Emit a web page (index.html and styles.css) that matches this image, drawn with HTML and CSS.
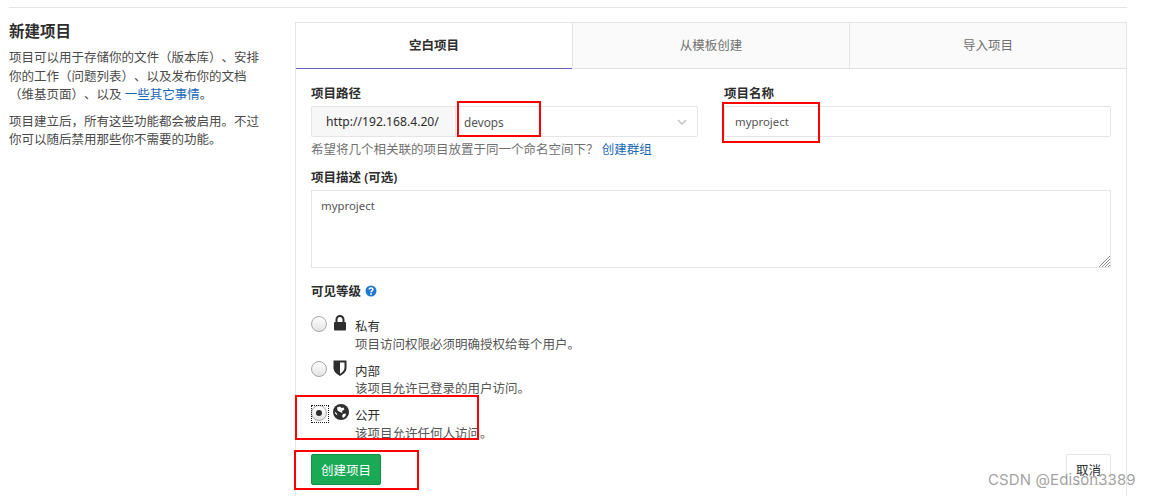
FILE: index.html
```html
<!DOCTYPE html>
<html lang="zh-CN">

<head>
    <meta charset="UTF-8">
    <title>新建项目</title>
    <link rel="stylesheet" href="styles.css">
</head>

<body>
    <div class="page">
        <div class="top-line"></div>

        <div class="row">
            <!-- Left description -->
            <div class="intro">
                <h2>新建项目</h2>
                <p>项目可以用于存储你的文件（版本库）、安排你的工作（问题列表）、以及发布你的文档（维基页面）、以及 <a href="#">一些其它事情</a>。</p>
                <p>项目建立后，所有这些功能都会被启用。不过你可以随后禁用那些你不需要的功能。</p>
            </div>

            <!-- Tabs and form -->
            <div class="panel">
                <div class="tabs">
                    <div class="tab active">空白项目</div>
                    <div class="tab">从模板创建</div>
                    <div class="tab">导入项目</div>
                </div>

                <form class="form">
                    <div class="two-cols">
                        <div class="col">
                            <label class="label">项目路径</label>
                            <div class="path-group">
                                <span class="prefix">http://192.168.4.20/</span>
                                <div class="select">
                                    <span>devops</span>
                                    <svg class="chevron" width="10" height="6" viewBox="0 0 10 6">
                                        <path d="M1 1l4 4 4-4" fill="none" stroke="#c4c4c4" stroke-width="1.5" />
                                    </svg>
                                </div>
                            </div>
                        </div>
                        <div class="col">
                            <label class="label">项目名称</label>
                            <input class="input" type="text" value="myproject">
                        </div>
                    </div>

                    <div class="help">希望将几个相关联的项目放置于同一个命名空间下？ <a href="#">创建群组</a></div>

                    <label class="label desc-label">项目描述 (可选)</label>
                    <div class="textarea-wrap">
                        <textarea class="textarea">myproject</textarea>
                        <svg class="grip" width="11" height="11" viewBox="0 0 11 11">
                            <path d="M0 11L11 0M3 11l8-8M6 11l5-5M9 11l2-2" stroke="#8a8a8a" stroke-width="1" />
                        </svg>
                    </div>

                    <div class="label level-label">可见等级
                        <svg class="help-icon" width="12" height="12" viewBox="0 0 12 12">
                            <circle cx="6" cy="6" r="5.500" fill="#1f78d1" />
                            <path d="M4.200 4.600c0-2.200 3.700-2.200 3.700-.1 0 1.300-1.900 1.300-1.900 2.700" fill="none" stroke="#fff" stroke-width="1.500" />
                            <rect x="5.200" y="8.100" width="1.600" height="1.600" fill="#fff" />
                        </svg>
                    </div>

                    <div class="option first">
                        <span class="radio"></span>
                        <svg class="opt-icon" width="14" height="16" viewBox="0 0 14 16">
                            <path d="M2.500 7V4.500a4.500 4.500 0 0 1 9 0V7H9.500V4.500a2.500 2.500 0 0 0-5 0V7z" fill="#2e2e2e" />
                            <rect x="1" y="7" width="12" height="8.500" rx="1" fill="#2e2e2e" />
                        </svg>
                        <div class="opt-text">
                            <div class="opt-title">私有</div>
                            <div>项目访问权限必须明确授权给每个用户。</div>
                        </div>
                    </div>

                    <div class="option">
                        <span class="radio"></span>
                        <svg class="opt-icon" width="14" height="16" viewBox="0 0 14 16">
                            <path d="M.5.500h13v7.500c0 3.500-3.500 6.500-6.500 8C4 14.500.5 11.500.5 8z" fill="#2e2e2e" />
                            <path d="M7 2.500h4.500V8c0 2.300-2.500 4.500-4.500 5.700z" fill="#fff" />
                        </svg>
                        <div class="opt-text">
                            <div class="opt-title">内部</div>
                            <div>该项目允许已登录的用户访问。</div>
                        </div>
                    </div>

                    <div class="option">
                        <span class="radio checked"></span>
                        <svg class="opt-icon globe" width="16" height="16" viewBox="0 0 16 16">
                            <circle cx="8" cy="8" r="8" fill="#2e2e2e" />
                            <path d="M4 3.500l3-1 1.500 1.500 2-.5 1 2-2.500 1.500.5 2L7 8 4.500 6.500zM10 10l3-.5-.5 2.500-2.500 2-1-2zM1.500 7.500l2 1.500 1 2.500-2-1.500z" fill="#fff" />
                        </svg>
                        <div class="opt-text">
                            <div class="opt-title">公开</div>
                            <div>该项目允许任何人访问。</div>
                        </div>
                    </div>

                    <div class="actions">
                        <button class="btn btn-create" type="button">创建项目</button>
                        <button class="btn btn-cancel" type="button">取消</button>
                    </div>
                </form>
            </div>
        </div>

        <!-- Red marks drawn over the screenshot -->
        <div class="mark mark-path"></div>
        <div class="mark mark-name"></div>
        <div class="mark mark-public"></div>
        <div class="mark mark-create"></div>

        <div class="watermark">CSDN @Edison3389</div>
    </div>
</body>

</html>
```

FILE: styles.css
```css
* {
    box-sizing: border-box;
    font-family: "Noto Sans", "Noto Sans CJK SC", sans-serif;
    text-spacing-trim: space-all;
}

html,
body {
    margin: 0;
    padding: 0;
    height: 496px;
    overflow: hidden;
    background: #fff;
}

body {
    color: #2e2e2e;
    font-size: 12.500px;
}

a {
    color: #1b69b6;
    text-decoration: none;
}

.page {
    position: relative;
    height: 496px;
    overflow: hidden;
    padding: 7px 23px 0 9px;
}

.top-line {
    height: 1px;
    background: #e5e5e5;
}

.row {
    display: flex;
    margin-top: 14px;
}

.intro {
    width: 286px;
    flex: none;
    padding-right: 33px;
    color: #4a4a4a;
    line-height: 18.500px;
}

.intro h2 {
    margin: 0 0 8px;
    font-size: 15.500px;
    line-height: 19px;
    font-weight: 600;
    color: #2e2e2e;
}

.intro p {
    margin: 0 0 8px;
}

.panel {
    flex: 1;
    height: 600px;
    border: 1px solid #e5e5e5;
    border-bottom: none;
}

.tabs {
    display: flex;
    height: 46px;
    background: #fafafa;
    border-bottom: 1px solid #e5e5e5;
}

.tab {
    flex: 1;
    display: flex;
    align-items: center;
    justify-content: center;
    padding-bottom: 2px;
    color: #707070;
    border-left: 1px solid #e5e5e5;
}

.tab.active {
    flex: none;
    width: 276px;
    height: 46px;
    background: #fff;
    color: #2e2e2e;
    font-weight: 600;
    border-left: none;
    border-bottom: 1px solid #6666c4;
}

.form {
    padding: 16px 15px 0;
}

.two-cols {
    display: flex;
    gap: 26px;
}

.col {
    flex: 1;
}

.label {
    display: block;
    font-weight: 600;
    line-height: 18px;
    margin-bottom: 3px;
}

.path-group {
    display: flex;
    height: 31px;
}

.prefix {
    width: 144px;
    flex: none;
    display: flex;
    align-items: center;
    padding-left: 14px;
    background: #f7f7f8;
    border: 1px solid #e5e5e5;
    border-right: none;
    border-radius: 2px 0 0 2px;
    color: #2e2e2e;
    font-size: 12.150px;
}

.select {
    flex: 1;
    display: flex;
    align-items: center;
    justify-content: space-between;
    padding: 0 10px 0 8px;
    border: 1px solid #e5e5e5;
    border-radius: 0 2px 2px 0;
    color: #555;
    font-size: 11.800px;
}

.input {
    display: block;
    width: 100%;
    height: 31px;
    padding: 0 10px;
    border: 1px solid #e5e5e5;
    border-radius: 2px;
    font-size: 11.400px;
    color: #555;
    outline: none;
}

.help {
    margin-top: 4px;
    line-height: 18px;
    color: #707070;
}

.desc-label {
    margin-top: 10px;
}

.textarea-wrap {
    position: relative;
}

.textarea {
    display: block;
    width: 100%;
    height: 78px;
    padding: 6px 9px;
    border: 1px solid #e5e5e5;
    border-radius: 0;
    font-size: 11.400px;
    line-height: 18px;
    color: #555;
    outline: none;
    resize: none;
}

.grip {
    position: absolute;
    right: 1px;
    bottom: 1px;
}

.level-label {
    margin: 15px 0 0;
}

.help-icon {
    vertical-align: -1px;
    margin-left: 1px;
}

.option {
    display: flex;
    height: 44.500px;
    line-height: 17.500px;
    color: #555;
}

.option.first {
    margin-top: 16px;
}

.radio {
    width: 16px;
    height: 16px;
    flex: none;
    margin-top: -1px;
    border: 1px solid #a8a8a8;
    border-radius: 50%;
    background: linear-gradient(#fff, #e4e4e4);
    position: relative;
}

.radio.checked::before {
    content: "";
    position: absolute;
    left: 4px;
    top: 4px;
    width: 6px;
    height: 6px;
    border-radius: 50%;
    background: #2e2e2e;
}

/* focus ring is square in the old browser theme */
.radio.checked::after {
    content: "";
    position: absolute;
    left: -1px;
    top: -1px;
    width: 16px;
    height: 16px;
    border: 1px dotted #222;
}

.opt-icon {
    flex: none;
    margin: -2px 0 0 6px;
}

.opt-text {
    margin-left: 8px;
    padding-top: 1px;
}

.globe + .opt-text {
    margin-left: 6px;
}

.opt-title {
    color: #2e2e2e;
}

.actions {
    display: flex;
    justify-content: space-between;
    margin-top: 3px;
}

.btn {
    height: 31px;
    padding: 0;
    border: 1px solid #e5e5e5;
    border-radius: 2px;
    background: #fff;
    color: #2e2e2e;
    font-size: 12.500px;
    white-space: nowrap;
}

.btn-create {
    width: 70px;
    background: #1aaa55;
    border-color: #168f48;
    color: #fff;
}

.btn-cancel {
    width: 45px;
}

/* annotations */
.mark {
    position: absolute;
    border: 2px solid #f00;
}

.mark-path {
    left: 457px;
    top: 101px;
    width: 84px;
    height: 36px;
}

.mark-name {
    left: 722px;
    top: 102px;
    width: 98px;
    height: 41px;
}

.mark-public {
    left: 295px;
    top: 395px;
    width: 184px;
    height: 45px;
}

.mark-create {
    left: 294px;
    top: 450px;
    width: 125px;
    height: 40px;
}

.watermark {
    position: absolute;
    left: 988px;
    top: 470px;
    font-family: "Inter", sans-serif;
    font-size: 15px;
    line-height: 20px;
    color: rgba(130, 130, 130, 0.75);
    letter-spacing: 0.100px;
}
```
